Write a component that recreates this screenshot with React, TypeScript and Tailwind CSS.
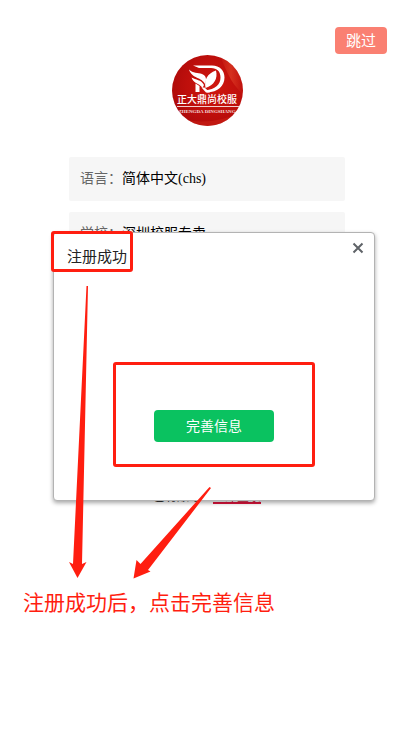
import React from "react";

const sans = "font-['Noto_Sans_CJK_SC',sans-serif]";
const serif = "font-['Liberation_Serif','Noto_Sans_CJK_SC',serif]";

const fields = [
  { id: "language", label: "语言：", value: "简体中文(chs)" },
  { id: "school", label: "学校：", value: "深圳校服专卖" },
];

function Logo() {
  return (
    <svg viewBox="0 0 72 72" className="size-[72px]" role="img" aria-label="正大鼎尚校服">
      <defs>
        <radialGradient id="logo-red" cx="0.6" cy="0.45" r="0.65">
          <stop offset="0" stopColor="#cf170f" />
          <stop offset="0.6" stopColor="#be0f0c" />
          <stop offset="1" stopColor="#ab0a09" />
        </radialGradient>
        <linearGradient id="logo-ray" x1="0" y1="0" x2="1" y2="0">
          <stop offset="0" stopColor="#e2452a" stopOpacity="0" />
          <stop offset="0.5" stopColor="#e2452a" stopOpacity="0.6" />
          <stop offset="1" stopColor="#e2452a" stopOpacity="0" />
        </linearGradient>
        <clipPath id="logo-clip">
          <circle cx="36.5" cy="36.5" r="35.5" />
        </clipPath>
      </defs>
      <g clipPath="url(#logo-clip)">
        <rect width="72" height="72" fill="url(#logo-red)" />
        <path d="M48 0C54 12 58 28 72 40V18C66 12 62 6 60 0Z" fill="url(#logo-ray)" />
        <path d="M0 60Q30 76 72 58V72H0Z" fill="#d52a1b" opacity="0.4" />
        <path d="M22 11.500H41C49 11.500 53.500 16.500 53.500 23.500C53.500 32 47 38 36 38.500L34.500 36.500C44 35 49.500 31 49.500 23.500C49.500 17.500 46 14 40 14H28Z" fill="#fff" />
        <path d="M18 15.500C22 19.500 27 18.500 31 20C35 21.500 36 25 34 30C31 23 21 25 18 15.500Z" fill="#fff" />
        <path d="M20.500 23.500C25 26 30 25.500 33 31L31.500 34C28 28.500 22.500 30 20.500 23.500Z" fill="#fff" />
        <path d="M45 16.500C47 25 43 31 34.500 34C33 26 36 19.500 45 16.500Z" fill="#fff" />
        <path d="M24.500 29.500V38H28.500V32Z" fill="#fff" />
        <path d="M30.500 33.500L35 38.500H39L33.500 33.500Z" fill="#fff" />
        <text x="36" y="49" textAnchor="middle" fontSize="10" fontWeight="500" fill="#fff" className={sans}>
          正大鼎尚校服
        </text>
        <path d="M6 52.500H68" stroke="#fff" strokeWidth="1" opacity="0.8" />
        <text x="36" y="59" textAnchor="middle" fontSize="5" fontWeight="700" fill="#fff" opacity="0.85" className="font-['Liberation_Serif',serif]">
          ZHENGDA DINGSHANG
        </text>
      </g>
    </svg>
  );
}

function Dialog() {
  return (
    <div
      role="dialog"
      aria-labelledby="dialog-title"
      className="absolute top-[232px] right-[39px] left-[53px] flex flex-col rounded-[4px] border border-[#b3b3b3] bg-white pb-[58px] shadow-[0_2px_4px_rgba(0,0,0,0.35)]"
    >
      <div className="flex items-start justify-between pt-[9px] pr-[10px] pl-[13px]">
        <h2 id="dialog-title" className="pt-[3px] text-[15px] leading-[22px] text-[#222]">
          注册成功
        </h2>
        <button type="button" aria-label="关闭" className="text-[#5f6368]">
          <svg viewBox="0 0 12 12" className="size-3" fill="none" stroke="currentColor" strokeWidth="2">
            <path d="M1.500 1.500L10.500 10.500M10.500 1.500L1.500 10.500" />
          </svg>
        </button>
      </div>
      <button type="button" className="mx-auto mt-[143px] h-8 w-[120px] rounded-[4px] bg-[#0ac260] pb-[2px] text-sm text-white">
        完善信息
      </button>
    </div>
  );
}

function Annotations() {
  return (
    <>
      <div className="absolute top-[231px] left-[51px] h-[41px] w-[82px] rounded-[3px] border-3 border-[#ff1e10]" />
      <div className="absolute top-[362px] left-[113px] h-[105px] w-[202px] rounded-[3px] border-3 border-[#ff1e10]" />
      <svg viewBox="0 0 160 300" className="absolute top-[282px] left-[60px] h-[300px] w-[160px]" fill="#ff1e10">
        <path d="M26.500 4H28L22 282L26.500 280L17.500 296L9 280L13 282Z" />
        <path d="M149.500 205L151 206L88 288L90.500 289.500L73.500 296.500L76.500 278L80.500 282Z" />
      </svg>
    </>
  );
}

export default function App() {
  return (
    <div className={`relative min-h-screen bg-white ${sans}`}>
      <header className="flex justify-end pt-[27px] pr-[27px]">
        <button type="button" className="h-[27px] w-[52px] rounded-[4px] bg-[#fa8072] pb-[2px] text-[15px] leading-[22px] text-white">
          跳过
        </button>
      </header>
      <main className="mx-auto flex w-2/3 flex-col items-center">
        <Logo />
        <form className="mt-[31px] flex w-full flex-col gap-[11px]">
          {fields.map((field) => (
            <div key={field.id} className={`flex h-11 items-center rounded-[2px] bg-[#f6f6f6] px-[11px] text-sm ${serif}`}>
              <label htmlFor={field.id} className="shrink-0 text-[#666]">
                {field.label}
              </label>
              <input id={field.id} defaultValue={field.value} className="min-w-0 flex-1 bg-transparent text-black" />
            </div>
          ))}
        </form>
        <p className="mt-[232px] text-xs leading-4 text-[#333]">
          已有账号？
          <a href="#login" className="text-[#dc143c] underline decoration-2 underline-offset-1">
            立即登录
          </a>
        </p>
      </main>
      <p className="mt-[82px] pl-[23px] text-[21px] leading-[30px] text-[#ff1e10]">注册成功后，点击完善信息</p>
      <Dialog />
      <Annotations />
    </div>
  );
}
